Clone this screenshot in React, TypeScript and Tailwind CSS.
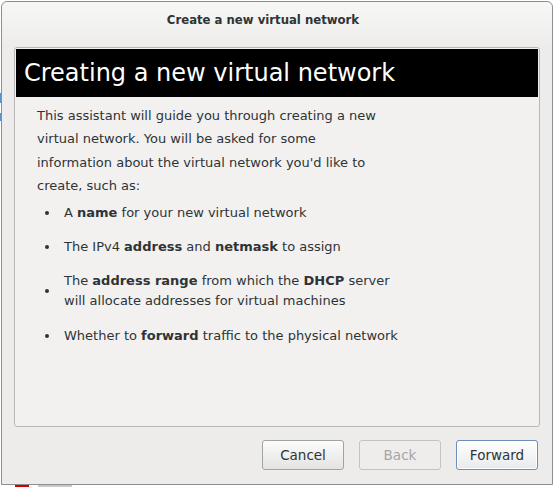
import React from "react";

const FONT = { fontFamily: '"DejaVu Sans", "Liberation Sans", sans-serif' };

function Bullet({ children, tall }: { children: React.ReactNode; tall?: boolean }) {
  return (
    <li className="flex items-center">
      <span className="ml-[8px] mr-[15px] size-[4px] shrink-0 rounded-full bg-[#2e3436]" />
      <span className={tall ? "leading-[20px]" : "leading-[19px]"}>{children}</span>
    </li>
  );
}

export default function App() {
  return (
    <div className="relative h-[487px] w-[554px] overflow-hidden bg-white text-[#2e3436]" style={FONT}>
      {/* bits of the desktop behind the dialog */}
      <div className="absolute left-0 top-[93px] h-[10px] w-[2px] bg-[#5b8fd0]" />
      <div className="absolute left-0 top-[113px] h-[8px] w-[2px] bg-[#5b8fd0]" />
      <div className="absolute left-[15px] top-[485px] h-[2px] w-[14px] bg-[#d40000]" />
      <div className="absolute left-[38px] top-[485px] h-[2px] w-[34px] bg-[#c8c8c8]" />

      <div className="relative ml-[1px] mt-[1px] flex h-[484px] w-[552px] flex-col rounded-t-[6px] border border-[#8e8e8e] bg-[#edeceb]">
        {/* title bar */}
        <div className="flex h-[45px] shrink-0 items-start justify-center rounded-t-[6px] bg-gradient-to-b from-[#f7f7f6] to-[#edeceb] pr-[28px] pt-[9px]">
          <span className="text-[11.7px] font-bold leading-[18px] text-[#2e3436]">Create a new virtual network</span>
        </div>

        {/* content frame */}
        <div className="ml-[12px] flex h-[380px] w-[526px] flex-col rounded-[3px] border border-[#b9b8b6] bg-[#f2f1f0] p-[1px]">
          <div className="flex h-[48px] items-center bg-black pl-[8px]">
            <span className="text-[24px] leading-[28px] text-white">Creating a new virtual network</span>
          </div>

          <div className="pl-[21px] pr-[20px] pt-[7px] text-[13px]">
            <p className="leading-[23.3px]">
              This assistant will guide you through creating a new
              <br />
              virtual network. You will be asked for some
              <br />
              information about the virtual network you'd like to
              <br />
              create, such as:
            </p>
            <ul className="mt-[6px] flex flex-col gap-[15px]">
              <Bullet>
                A <b>name</b> for your new virtual network
              </Bullet>
              <Bullet>
                The IPv4 <b>address</b> and <b>netmask</b> to assign
              </Bullet>
              <Bullet tall>
                The <b>address range</b> from which the <b>DHCP</b> server
                <br />
                will allocate addresses for virtual machines
              </Bullet>
              <Bullet>
                Whether to <b>forward</b> traffic to the physical network
              </Bullet>
            </ul>
          </div>
        </div>

        {/* buttons */}
        <div className="mr-[14px] mt-[13px] flex justify-end gap-[15px] text-[13.5px]">
          <button className="h-[30px] w-[82px] rounded-[3px] border border-[#a3a3a1] bg-gradient-to-b from-[#fcfcfc] to-[#e4e3e2] text-[#2e3436]">
            Cancel
          </button>
          <button className="h-[30px] w-[82px] rounded-[3px] border border-[#c4c3c1] bg-[#eeedec] text-[#a6a6a5]">
            Back
          </button>
          <button className="h-[30px] w-[82px] rounded-[3px] border border-[#6f8db5] bg-gradient-to-b from-[#ffffff] to-[#e9eaec] text-[#2e3436] shadow-[inset_0_0_0_1px_#ffffff]">
            Forward
          </button>
        </div>
      </div>
    </div>
  );
}
